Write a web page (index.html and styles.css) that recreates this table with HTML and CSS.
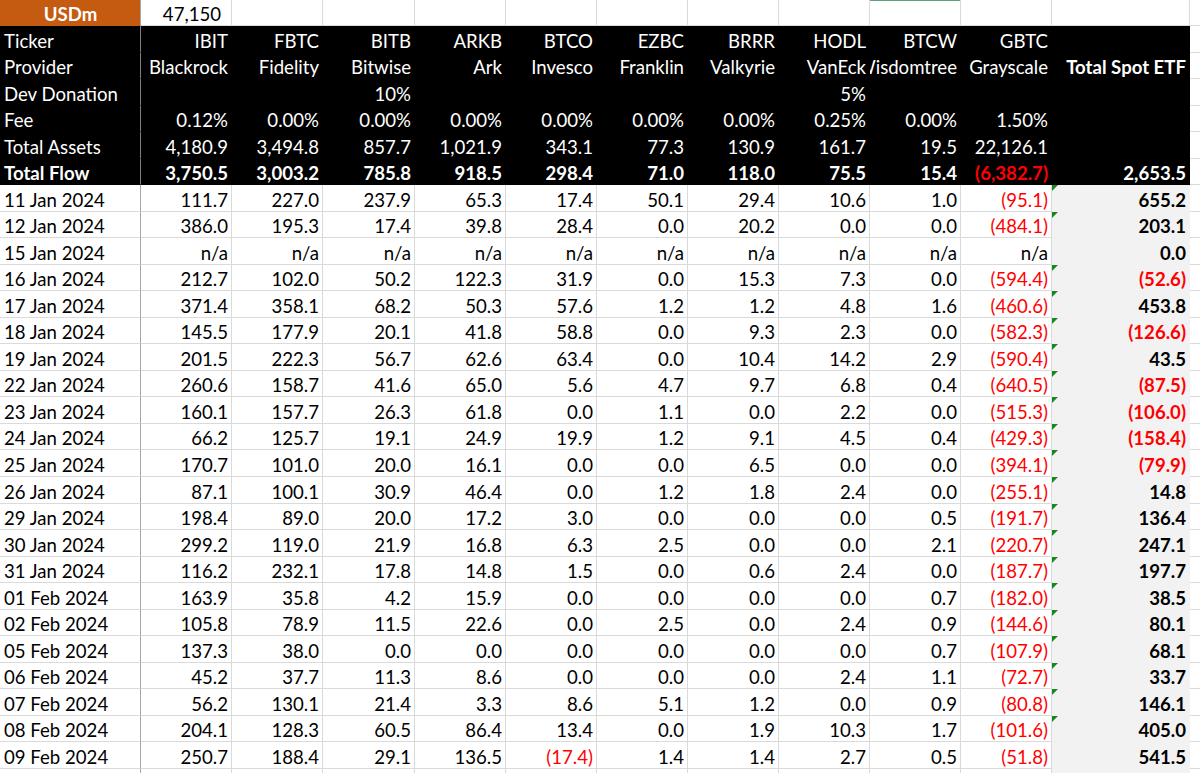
FILE: index.html
```html
<!DOCTYPE html>
<html lang="en">
<head>
<meta charset="utf-8">
<title>Spot Bitcoin ETF Flows</title>
<link rel="stylesheet" href="styles.css">
</head>
<body>
<div class="sheet">
  <div class="row top">
    <div class="c a usd">USDm</div><div class="c wide-pad">47,150</div><div class="c"></div><div class="c"></div><div class="c"></div><div class="c"></div><div class="c"></div><div class="c"></div><div class="c"></div><div class="c sel"></div><div class="c"></div><div class="c"></div><div class="c tail"></div>
  </div>

  <div class="row hd">
    <div class="c a">Ticker</div><div class="c">IBIT</div><div class="c">FBTC</div><div class="c">BITB</div><div class="c">ARKB</div><div class="c">BTCO</div><div class="c">EZBC</div><div class="c">BRRR</div><div class="c">HODL</div><div class="c">BTCW</div><div class="c">GBTC</div><div class="c"></div><div class="c tail"></div>
  </div>
  <div class="row hd">
    <div class="c a">Provider</div><div class="c">Blackrock</div><div class="c">Fidelity</div><div class="c">Bitwise</div><div class="c">Ark</div><div class="c">Invesco</div><div class="c">Franklin</div><div class="c">Valkyrie</div><div class="c">VanEck</div><div class="c">Wisdomtree</div><div class="c">Grayscale</div><div class="c b">Total Spot ETF</div><div class="c tail"></div>
  </div>
  <div class="row hd">
    <div class="c a">Dev Donation</div><div class="c"></div><div class="c"></div><div class="c">10%</div><div class="c"></div><div class="c"></div><div class="c"></div><div class="c"></div><div class="c">5%</div><div class="c"></div><div class="c"></div><div class="c"></div><div class="c tail"></div>
  </div>
  <div class="row hd">
    <div class="c a">Fee</div><div class="c">0.12%</div><div class="c">0.00%</div><div class="c">0.00%</div><div class="c">0.00%</div><div class="c">0.00%</div><div class="c">0.00%</div><div class="c">0.00%</div><div class="c">0.25%</div><div class="c">0.00%</div><div class="c">1.50%</div><div class="c"></div><div class="c tail"></div>
  </div>
  <div class="row hd">
    <div class="c a">Total Assets</div><div class="c">4,180.9</div><div class="c">3,494.8</div><div class="c">857.7</div><div class="c">1,021.9</div><div class="c">343.1</div><div class="c">77.3</div><div class="c">130.9</div><div class="c">161.7</div><div class="c">19.5</div><div class="c">22,126.1</div><div class="c"></div><div class="c tail"></div>
  </div>
  <div class="row hd bold">
    <div class="c a">Total Flow</div><div class="c">3,750.5</div><div class="c">3,003.2</div><div class="c">785.8</div><div class="c">918.5</div><div class="c">298.4</div><div class="c">71.0</div><div class="c">118.0</div><div class="c">75.5</div><div class="c">15.4</div><div class="c neg">(6,382.7)</div><div class="c">2,653.5</div><div class="c tail"></div>
  </div>

  <div class="row dr"><div class="c a">11 Jan 2024</div><div class="c">111.7</div><div class="c">227.0</div><div class="c">237.9</div><div class="c">65.3</div><div class="c">17.4</div><div class="c">50.1</div><div class="c">29.4</div><div class="c">10.6</div><div class="c">1.0</div><div class="c neg">(95.1)</div><div class="c l flag">655.2</div><div class="c tail"></div></div>
  <div class="row dr"><div class="c a">12 Jan 2024</div><div class="c">386.0</div><div class="c">195.3</div><div class="c">17.4</div><div class="c">39.8</div><div class="c">28.4</div><div class="c">0.0</div><div class="c">20.2</div><div class="c">0.0</div><div class="c">0.0</div><div class="c neg">(484.1)</div><div class="c l flag">203.1</div><div class="c tail"></div></div>
  <div class="row dr"><div class="c a">15 Jan 2024</div><div class="c">n/a</div><div class="c">n/a</div><div class="c">n/a</div><div class="c">n/a</div><div class="c">n/a</div><div class="c">n/a</div><div class="c">n/a</div><div class="c">n/a</div><div class="c">n/a</div><div class="c">n/a</div><div class="c l">0.0</div><div class="c tail"></div></div>
  <div class="row dr"><div class="c a">16 Jan 2024</div><div class="c">212.7</div><div class="c">102.0</div><div class="c">50.2</div><div class="c">122.3</div><div class="c">31.9</div><div class="c">0.0</div><div class="c">15.3</div><div class="c">7.3</div><div class="c">0.0</div><div class="c neg">(594.4)</div><div class="c l flag neg">(52.6)</div><div class="c tail"></div></div>
  <div class="row dr"><div class="c a">17 Jan 2024</div><div class="c">371.4</div><div class="c">358.1</div><div class="c">68.2</div><div class="c">50.3</div><div class="c">57.6</div><div class="c">1.2</div><div class="c">1.2</div><div class="c">4.8</div><div class="c">1.6</div><div class="c neg">(460.6)</div><div class="c l flag">453.8</div><div class="c tail"></div></div>
  <div class="row dr"><div class="c a">18 Jan 2024</div><div class="c">145.5</div><div class="c">177.9</div><div class="c">20.1</div><div class="c">41.8</div><div class="c">58.8</div><div class="c">0.0</div><div class="c">9.3</div><div class="c">2.3</div><div class="c">0.0</div><div class="c neg">(582.3)</div><div class="c l flag neg">(126.6)</div><div class="c tail"></div></div>
  <div class="row dr"><div class="c a">19 Jan 2024</div><div class="c">201.5</div><div class="c">222.3</div><div class="c">56.7</div><div class="c">62.6</div><div class="c">63.4</div><div class="c">0.0</div><div class="c">10.4</div><div class="c">14.2</div><div class="c">2.9</div><div class="c neg">(590.4)</div><div class="c l flag">43.5</div><div class="c tail"></div></div>
  <div class="row dr"><div class="c a">22 Jan 2024</div><div class="c">260.6</div><div class="c">158.7</div><div class="c">41.6</div><div class="c">65.0</div><div class="c">5.6</div><div class="c">4.7</div><div class="c">9.7</div><div class="c">6.8</div><div class="c">0.4</div><div class="c neg">(640.5)</div><div class="c l flag neg">(87.5)</div><div class="c tail"></div></div>
  <div class="row dr"><div class="c a">23 Jan 2024</div><div class="c">160.1</div><div class="c">157.7</div><div class="c">26.3</div><div class="c">61.8</div><div class="c">0.0</div><div class="c">1.1</div><div class="c">0.0</div><div class="c">2.2</div><div class="c">0.0</div><div class="c neg">(515.3)</div><div class="c l flag neg">(106.0)</div><div class="c tail"></div></div>
  <div class="row dr"><div class="c a">24 Jan 2024</div><div class="c">66.2</div><div class="c">125.7</div><div class="c">19.1</div><div class="c">24.9</div><div class="c">19.9</div><div class="c">1.2</div><div class="c">9.1</div><div class="c">4.5</div><div class="c">0.4</div><div class="c neg">(429.3)</div><div class="c l flag neg">(158.4)</div><div class="c tail"></div></div>
  <div class="row dr"><div class="c a">25 Jan 2024</div><div class="c">170.7</div><div class="c">101.0</div><div class="c">20.0</div><div class="c">16.1</div><div class="c">0.0</div><div class="c">0.0</div><div class="c">6.5</div><div class="c">0.0</div><div class="c">0.0</div><div class="c neg">(394.1)</div><div class="c l flag neg">(79.9)</div><div class="c tail"></div></div>
  <div class="row dr"><div class="c a">26 Jan 2024</div><div class="c">87.1</div><div class="c">100.1</div><div class="c">30.9</div><div class="c">46.4</div><div class="c">0.0</div><div class="c">1.2</div><div class="c">1.8</div><div class="c">2.4</div><div class="c">0.0</div><div class="c neg">(255.1)</div><div class="c l flag">14.8</div><div class="c tail"></div></div>
  <div class="row dr"><div class="c a">29 Jan 2024</div><div class="c">198.4</div><div class="c">89.0</div><div class="c">20.0</div><div class="c">17.2</div><div class="c">3.0</div><div class="c">0.0</div><div class="c">0.0</div><div class="c">0.0</div><div class="c">0.5</div><div class="c neg">(191.7)</div><div class="c l flag">136.4</div><div class="c tail"></div></div>
  <div class="row dr"><div class="c a">30 Jan 2024</div><div class="c">299.2</div><div class="c">119.0</div><div class="c">21.9</div><div class="c">16.8</div><div class="c">6.3</div><div class="c">2.5</div><div class="c">0.0</div><div class="c">0.0</div><div class="c">2.1</div><div class="c neg">(220.7)</div><div class="c l flag">247.1</div><div class="c tail"></div></div>
  <div class="row dr"><div class="c a">31 Jan 2024</div><div class="c">116.2</div><div class="c">232.1</div><div class="c">17.8</div><div class="c">14.8</div><div class="c">1.5</div><div class="c">0.0</div><div class="c">0.6</div><div class="c">2.4</div><div class="c">0.0</div><div class="c neg">(187.7)</div><div class="c l flag">197.7</div><div class="c tail"></div></div>
  <div class="row dr"><div class="c a">01 Feb 2024</div><div class="c">163.9</div><div class="c">35.8</div><div class="c">4.2</div><div class="c">15.9</div><div class="c">0.0</div><div class="c">0.0</div><div class="c">0.0</div><div class="c">0.0</div><div class="c">0.7</div><div class="c neg">(182.0)</div><div class="c l flag">38.5</div><div class="c tail"></div></div>
  <div class="row dr"><div class="c a">02 Feb 2024</div><div class="c">105.8</div><div class="c">78.9</div><div class="c">11.5</div><div class="c">22.6</div><div class="c">0.0</div><div class="c">2.5</div><div class="c">0.0</div><div class="c">2.4</div><div class="c">0.9</div><div class="c neg">(144.6)</div><div class="c l flag">80.1</div><div class="c tail"></div></div>
  <div class="row dr"><div class="c a">05 Feb 2024</div><div class="c">137.3</div><div class="c">38.0</div><div class="c">0.0</div><div class="c">0.0</div><div class="c">0.0</div><div class="c">0.0</div><div class="c">0.0</div><div class="c">0.0</div><div class="c">0.7</div><div class="c neg">(107.9)</div><div class="c l flag">68.1</div><div class="c tail"></div></div>
  <div class="row dr"><div class="c a">06 Feb 2024</div><div class="c">45.2</div><div class="c">37.7</div><div class="c">11.3</div><div class="c">8.6</div><div class="c">0.0</div><div class="c">0.0</div><div class="c">0.0</div><div class="c">2.4</div><div class="c">1.1</div><div class="c neg">(72.7)</div><div class="c l flag">33.7</div><div class="c tail"></div></div>
  <div class="row dr"><div class="c a">07 Feb 2024</div><div class="c">56.2</div><div class="c">130.1</div><div class="c">21.4</div><div class="c">3.3</div><div class="c">8.6</div><div class="c">5.1</div><div class="c">1.2</div><div class="c">0.0</div><div class="c">0.9</div><div class="c neg">(80.8)</div><div class="c l flag">146.1</div><div class="c tail"></div></div>
  <div class="row dr"><div class="c a">08 Feb 2024</div><div class="c">204.1</div><div class="c">128.3</div><div class="c">60.5</div><div class="c">86.4</div><div class="c">13.4</div><div class="c">0.0</div><div class="c">1.9</div><div class="c">10.3</div><div class="c">1.7</div><div class="c neg">(101.6)</div><div class="c l flag">405.0</div><div class="c tail"></div></div>
  <div class="row dr"><div class="c a">09 Feb 2024</div><div class="c">250.7</div><div class="c">188.4</div><div class="c">29.1</div><div class="c">136.5</div><div class="c neg">(17.4)</div><div class="c">1.4</div><div class="c">1.4</div><div class="c">2.7</div><div class="c">0.5</div><div class="c neg">(51.8)</div><div class="c l">541.5</div><div class="c tail"></div></div>
  <div class="row dr"><div class="c a"></div><div class="c"></div><div class="c"></div><div class="c"></div><div class="c"></div><div class="c"></div><div class="c"></div><div class="c"></div><div class="c"></div><div class="c"></div><div class="c"></div><div class="c l"></div><div class="c tail"></div></div>
</div>
</body>
</html>
```

FILE: styles.css
```css
html, body {
  margin: 0;
  padding: 0;
  background: #ffffff;
  overflow: hidden;
}

.sheet {
  width: 1200px;
  display: flex;
  flex-direction: column;
  font-family: "Lato", "Open Sans", sans-serif;
  font-size: 18.6px;
  color: #000000;
}

.row {
  display: grid;
  grid-template-columns: 141px 91px 91px 92px 91px 91px 91px 91px 91px 91px 91px 138px 1fr;
  height: 26.55px;
  flex: none;
}

.row.top { height: 26px; }
.row.hd { height: 26.5px; }

.c {
  box-sizing: border-box;
  display: flex;
  align-items: flex-end;
  justify-content: flex-end;
  padding: 0 3px 2px 3px;
  line-height: 18px;
  white-space: nowrap;
  overflow: hidden;
  border-right: 1px solid #dadada;
  border-bottom: 1px solid #dadada;
  min-width: 0;
}

.c.a {
  justify-content: flex-start;
  padding-left: 4px;
  border-right-color: #a6a6a6;
}

.c.tail {
  border-right: none;
  padding: 0;
}

/* top row */
.c.usd {
  background: #c55a11;
  color: #ffffff;
  font-weight: 700;
  justify-content: center;
  border-bottom-color: #c55a11;
}

.c.wide-pad { padding-right: 10px; }

.c.sel { box-shadow: inset 0 1px 0 #5fa37a; }

/* black header block */
.hd .c {
  background: #000000;
  color: #ffffff;
  border-bottom-color: #000000;
  border-right-color: #000000;
}

.hd .c.a { border-right-color: #7f7f7f; }

.hd .c.tail {
  background: #ffffff;
  border-bottom-color: #dadada;
}

.bold .c, .c.b { font-weight: 700; }

.c.neg { color: #ff0000; }
.hd .c.neg { color: #ff0000; }

/* total column */
.dr .c.l {
  background: #f2f2f2;
  border-color: #f2f2f2;
  font-weight: 700;
  position: relative;
}

.c.flag::before {
  content: "";
  position: absolute;
  left: 0;
  top: 0;
  width: 0;
  height: 0;
  border-top: 6px solid #138a1b;
  border-right: 6px solid transparent;
}
```
